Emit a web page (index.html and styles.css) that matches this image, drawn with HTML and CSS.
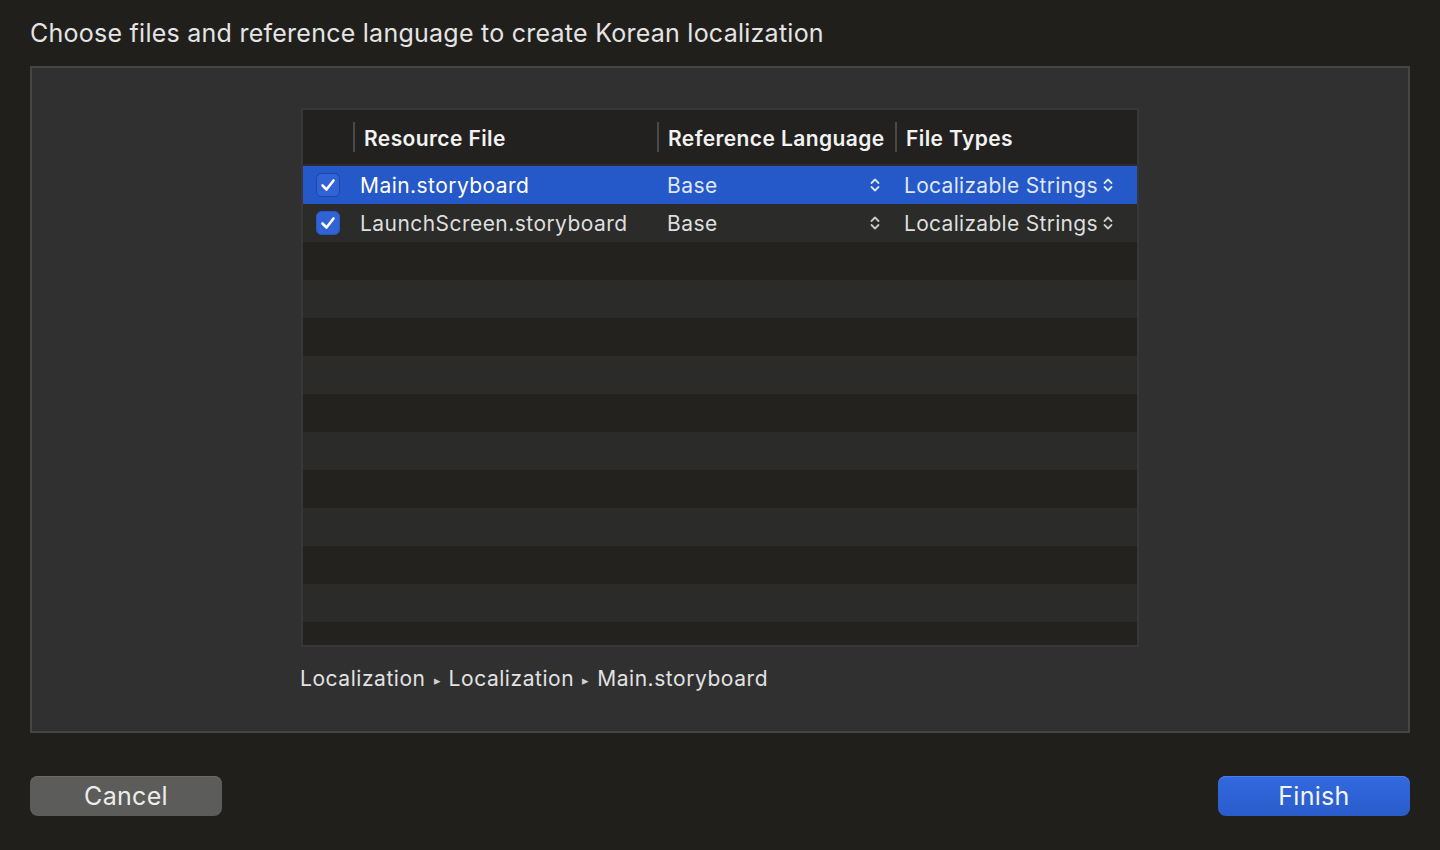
FILE: index.html
```html
<!DOCTYPE html>
<html>
<head>
<meta charset="utf-8">
<link rel="stylesheet" href="styles.css">
</head>
<body>
<div class="dialog">
  <div class="title">Choose files and reference language to create Korean localization</div>
  <div class="panel">
    <div class="table">
      <div class="thead">
        <div class="th th-check"></div>
        <div class="th"><span class="sep"></span>Resource File</div>
        <div class="th"><span class="sep"></span>Reference Language</div>
        <div class="th"><span class="sep"></span>File Types</div>
      </div>
      <div class="tbody">
        <div class="row selected">
          <div class="cell cell-check"><svg class="cb" width="24" height="24" viewBox="0 0 24 24"><rect x="0.5" y="0.5" width="23" height="23" rx="5" fill="#2f63d6" stroke="#1f45a3"/><path d="M6.5 12.5 L10.5 16.5 L17.5 7.5" fill="none" stroke="#fff" stroke-width="2.6" stroke-linecap="round" stroke-linejoin="round"/></svg></div>
          <div class="cell name">Main.storyboard</div>
          <div class="cell lang"><span>Base</span><svg class="step" width="10" height="16" viewBox="0 0 10 16"><path d="M1.5 6 L5 2.5 L8.5 6 M1.5 10 L5 13.5 L8.5 10" fill="none" stroke="currentColor" stroke-width="1.8" stroke-linecap="round" stroke-linejoin="round"/></svg></div>
          <div class="cell type"><span>Localizable Strings</span><svg class="step" width="10" height="16" viewBox="0 0 10 16"><path d="M1.5 6 L5 2.5 L8.5 6 M1.5 10 L5 13.5 L8.5 10" fill="none" stroke="currentColor" stroke-width="1.8" stroke-linecap="round" stroke-linejoin="round"/></svg></div>
        </div>
        <div class="row light">
          <div class="cell cell-check"><svg class="cb" width="24" height="24" viewBox="0 0 24 24"><rect x="0.5" y="0.5" width="23" height="23" rx="5" fill="#2f63d6" stroke="#2a58c0"/><path d="M6.5 12.5 L10.5 16.5 L17.5 7.5" fill="none" stroke="#fff" stroke-width="2.6" stroke-linecap="round" stroke-linejoin="round"/></svg></div>
          <div class="cell name">LaunchScreen.storyboard</div>
          <div class="cell lang"><span>Base</span><svg class="step" width="10" height="16" viewBox="0 0 10 16"><path d="M1.5 6 L5 2.5 L8.5 6 M1.5 10 L5 13.5 L8.5 10" fill="none" stroke="currentColor" stroke-width="1.8" stroke-linecap="round" stroke-linejoin="round"/></svg></div>
          <div class="cell type"><span>Localizable Strings</span><svg class="step" width="10" height="16" viewBox="0 0 10 16"><path d="M1.5 6 L5 2.5 L8.5 6 M1.5 10 L5 13.5 L8.5 10" fill="none" stroke="currentColor" stroke-width="1.8" stroke-linecap="round" stroke-linejoin="round"/></svg></div>
        </div>
        <div class="row dark"></div>
        <div class="row light"></div>
        <div class="row dark"></div>
        <div class="row light"></div>
        <div class="row dark"></div>
        <div class="row light"></div>
        <div class="row dark"></div>
        <div class="row light"></div>
        <div class="row dark"></div>
        <div class="row light"></div>
        <div class="row dark"></div>
      </div>
    </div>
    <div class="crumbs"><span>Localization</span><span class="tri">&#9656;</span><span>Localization</span><span class="tri">&#9656;</span><span>Main.storyboard</span></div>
  </div>
  <div class="buttons">
    <button class="btn cancel">Cancel</button>
    <button class="btn finish">Finish</button>
  </div>
</div>
</body>
</html>
```
FILE: styles.css
```css
html, body {
  margin: 0;
  padding: 0;
  background: #201f1c;
  width: 1440px;
  height: 850px;
  overflow: hidden;
  font-family: Inter, "Noto Sans", sans-serif;
  color: #e2e2e2;
}
.dialog {
  display: flex;
  flex-direction: column;
}
.title {
  padding: 18px 30px 0;
  font-size: 25px;
  line-height: 30px;
  color: #e4e4e4;
  letter-spacing: 0.25px;
}
.panel {
  margin: 18px 30px 0;
  height: 663px;
  border: 2px solid #454545;
  background: #303030;
  display: flex;
  flex-direction: column;
  align-items: center;
}
.table {
  margin-top: 40px;
  width: 834px;
  height: 535px;
  border: 2px solid #373737;
  background: #22211f;
  overflow: hidden;
  display: flex;
  flex-direction: column;
}
.thead {
  display: grid;
  grid-template-columns: 50px 304px 238px 1fr;
  height: 54px;
  border-bottom: 2px solid #2c2c2c;
  background: #22211f;
  flex: none;
}
.th {
  position: relative;
  display: flex;
  align-items: center;
  padding-left: 11px;
  padding-top: 2px;
  font-size: 21px;
  font-weight: 600;
  color: #f2f2f2;
  letter-spacing: 0.4px;
}
.th-check { padding: 0; }
.sep {
  position: absolute;
  left: 0;
  top: 12px;
  bottom: 12px;
  width: 2px;
  background: #4a4a4a;
}
.tbody {
  display: flex;
  flex-direction: column;
  flex: none;
}
.row {
  height: 38px;
  flex: none;
  display: grid;
  grid-template-columns: 50px 304px 238px 1fr;
  align-items: center;
  font-size: 21px;
  letter-spacing: 0.45px;
  color: #dedede;
}
.row.dark { background: #23221f; }
.row.light { background: #2b2b2a; }
.row.selected { background: #2558c9; color: #dfe6f8; }
.cell { display: flex; align-items: center; height: 100%; }
.cell-check { padding-left: 13px; }
.cb { display: block; }
.name { padding-left: 7px; }
.row.selected .name { color: #ffffff; }
.lang {
  padding-left: 10px;
  padding-right: 15px;
  justify-content: space-between;
}
.type {
  padding-left: 9px;
  gap: 5px;
  letter-spacing: 0.3px;
}
.step { display: block; color: #c9c9c9; }
.row.selected .step { color: #dbe3f7; }
.crumbs {
  align-self: flex-start;
  margin-left: 268px;
  margin-top: 18px;
  font-size: 21px;
  line-height: 26px;
  letter-spacing: 0.55px;
  color: #e2e2e2;
  display: flex;
  align-items: center;
}
.tri {
  font-size: 13px;
  color: #d0d0d0;
  margin: 2px 8px 0 8px;
  letter-spacing: 0;
}
.buttons {
  display: flex;
  justify-content: space-between;
  padding: 0 30px;
  margin-top: 43px;
}
.btn {
  width: 192px;
  height: 40px;
  border: none;
  border-radius: 8px;
  font-family: Inter, "Noto Sans", sans-serif;
  font-size: 25px;
  letter-spacing: 0.3px;
  color: #ececec;
  padding: 0;
}
.cancel {
  background: #5c5c5b;
  box-shadow: inset 0 1px 0 #6a6a69;
}
.finish {
  background: linear-gradient(#3269df, #2a5cca);
  box-shadow: inset 0 1px 0 #4a7ee6;
  color: #f2f5fc;
}
```
